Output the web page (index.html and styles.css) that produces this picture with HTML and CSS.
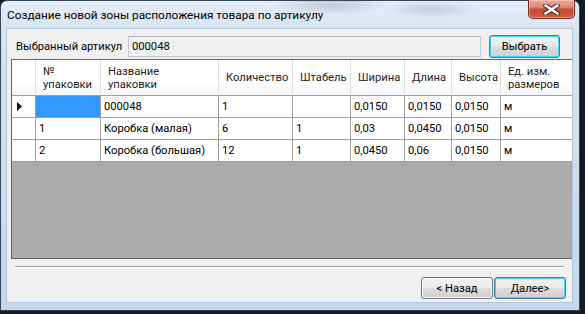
FILE: index.html
```html
<!DOCTYPE html>
<html lang="ru">
<head>
<meta charset="utf-8">
<title>Создание новой зоны</title>
<link rel="stylesheet" href="styles.css">
</head>
<body>
<div class="window">
  <div class="titlebar">
    <span class="title">Создание новой зоны расположения товара по артикулу</span>
    <div class="close">
      <svg width="17" height="11" viewBox="0 0 17 11">
        <path d="M2.5 1.5 L14.5 9.5 M14.5 1.5 L2.5 9.5" stroke="#5a2a22" stroke-width="4.6" stroke-linecap="round" fill="none"/>
        <path d="M2.5 1.5 L14.5 9.5 M14.5 1.5 L2.5 9.5" stroke="#ffffff" stroke-width="2.6" stroke-linecap="round" fill="none"/>
      </svg>
    </div>
  </div>
  <div class="client">
    <div class="article-row">
      <span class="label">Выбранный артикул</span>
      <div class="textbox">000048</div>
      <button class="btn default pick">Выбрать</button>
    </div>
    <div class="grid">
      <div class="row header">
        <div class="cell rh"></div>
        <div class="cell c1">№<br>упаковки</div>
        <div class="cell c2">Название<br>упаковки</div>
        <div class="cell c3">Количество</div>
        <div class="cell c4">Штабель</div>
        <div class="cell c5">Ширина</div>
        <div class="cell c6">Длина</div>
        <div class="cell c7">Высота</div>
        <div class="cell c8">Ед. изм.<br>размеров</div>
      </div>
      <div class="row">
        <div class="cell rh"><svg class="arrow" width="6" height="9" viewBox="0 0 6 9"><polygon points="0,0 5,4.5 0,9" fill="#000"/></svg></div>
        <div class="cell c1 selected"></div>
        <div class="cell c2">000048</div>
        <div class="cell c3">1</div>
        <div class="cell c4"></div>
        <div class="cell c5">0,0150</div>
        <div class="cell c6">0,0150</div>
        <div class="cell c7">0,0150</div>
        <div class="cell c8">м</div>
      </div>
      <div class="row">
        <div class="cell rh"></div>
        <div class="cell c1">1</div>
        <div class="cell c2">Коробка (малая)</div>
        <div class="cell c3">6</div>
        <div class="cell c4">1</div>
        <div class="cell c5">0,03</div>
        <div class="cell c6">0,0450</div>
        <div class="cell c7">0,0150</div>
        <div class="cell c8">м</div>
      </div>
      <div class="row">
        <div class="cell rh"></div>
        <div class="cell c1">2</div>
        <div class="cell c2">Коробка (большая)</div>
        <div class="cell c3">12</div>
        <div class="cell c4">1</div>
        <div class="cell c5">0,0450</div>
        <div class="cell c6">0,06</div>
        <div class="cell c7">0,0150</div>
        <div class="cell c8">м</div>
      </div>
    </div>
    <div class="separator"></div>
    <div class="footer">
      <button class="btn">&lt; Назад</button>
      <button class="btn default">Далее&gt;</button>
    </div>
  </div>
</div>
</body>
</html>
```

FILE: styles.css
```css
* { box-sizing: border-box; }
html, body { margin: 0; padding: 0; }
body {
  width: 585px;
  height: 314px;
  overflow: hidden;
  background: #121a26;
  font-family: Roboto, "Liberation Sans", sans-serif;
  font-size: 11.2px;
  color: #000;
}
.window {
  position: relative;
  width: 580px;
  height: 311px;
  border: 1px solid #34465c;
  border-radius: 7px 7px 0 0;
  background:
    radial-gradient(ellipse 60px 10px at 330px 4px, rgba(120,140,160,0.35), transparent),
    radial-gradient(ellipse 50px 9px at 430px 8px, rgba(120,140,160,0.3), transparent),
    linear-gradient(180deg, #e6eef7 0%, #d6e3f1 30px, #c6d8ec 100%);
  padding: 0 6px 7px 5px;
  display: flex;
  flex-direction: column;
}
.titlebar {
  height: 27px;
  display: flex;
  align-items: center;
  padding: 0 0 0 1px;
  flex: none;
}
.title {
  font-size: 11.8px;
  color: #000;
}
.close {
  position: absolute;
  top: -1px;
  right: 4px;
  width: 47px;
  height: 19px;
  border: 1px solid #6e2e24;
  border-top: none;
  border-radius: 0 0 5px 5px;
  background: linear-gradient(180deg, #e8aa9c 0%, #dc8a76 40%, #c84a31 52%, #cf5a3e 100%);
  box-shadow: inset 0 0 0 1px rgba(255,220,210,0.45);
  display: flex;
  align-items: center;
  justify-content: center;
}
.client {
  flex: 1;
  background: #f0f0f0;
  border: 1px solid #b5c6da;
  overflow: hidden;
  display: flex;
  flex-direction: column;
}
.article-row {
  display: flex;
  align-items: center;
  height: 24px;
  margin-top: 5px;
  padding-left: 9px;
}
.label { width: 112px; flex: none; white-space: nowrap; }
.textbox {
  width: 353px;
  height: 21px;
  border: 1px solid #c5c9d0;
  border-top-color: #abadb3;
  background: #f0f0f0;
  padding: 3px 0 0 3px;
  flex: none;
}
.btn {
  font-family: inherit;
  font-size: 11.2px;
  color: #000;
  height: 22px;
  border: 1px solid #707070;
  border-radius: 3px;
  background: linear-gradient(180deg, #f2f2f2 0%, #ebebeb 48%, #dddddd 52%, #cfcfcf 100%);
  box-shadow: inset 0 0 0 1px #fbfbfb;
  padding: 0;
  flex: none;
}
.btn.default {
  border-color: #3c7fb1;
  box-shadow: inset 0 0 0 1px #48d0f6;
}
.pick {
  width: 71px;
  height: 23px;
  margin-left: 8px;
}
.grid {
  margin: 1px 0 0 4px;
  width: 570px;
  height: 200px;
  border: 1px solid #646464;
  background: #ababab;
  flex: none;
}
.row {
  display: flex;
  height: 22px;
}
.row.header {
  height: 36px;
}
.cell {
  flex: none;
  height: 100%;
  background: #fff;
  border-right: 1px solid #a0a0a0;
  border-bottom: 1px solid #a0a0a0;
  padding-left: 3px;
  display: flex;
  align-items: center;
  white-space: nowrap;
}
.header .cell {
  background: linear-gradient(180deg, #ffffff 0%, #ffffff 60%, #f6f7f9 100%);
  border-right: 1px solid #dde0e5;
  border-bottom: 1px solid #a0a0a0;
  padding-left: 7px;
  line-height: 13px;
  color: #1e1e1e;
}
.rh { width: 24px; padding-left: 5px; }
.header .rh { padding-left: 0; }
.c1 { width: 65px; }
.c2 { width: 118px; }
.c3 { width: 74px; }
.c4 { width: 58px; }
.c5 { width: 54px; }
.c6 { width: 47px; }
.c7 { width: 49px; }
.c8 { width: 72px; }
.selected { background: #3399ff; }
.separator {
  margin: 7px 0 0 8px;
  width: 549px;
  height: 2px;
  border-top: 1px solid #a0a0a0;
  border-bottom: 1px solid #ffffff;
  flex: none;
}
.footer {
  display: flex;
  justify-content: flex-end;
  gap: 1px;
  margin-top: 9px;
  padding-right: 6px;
}
.footer .btn { width: 72px; }
```
